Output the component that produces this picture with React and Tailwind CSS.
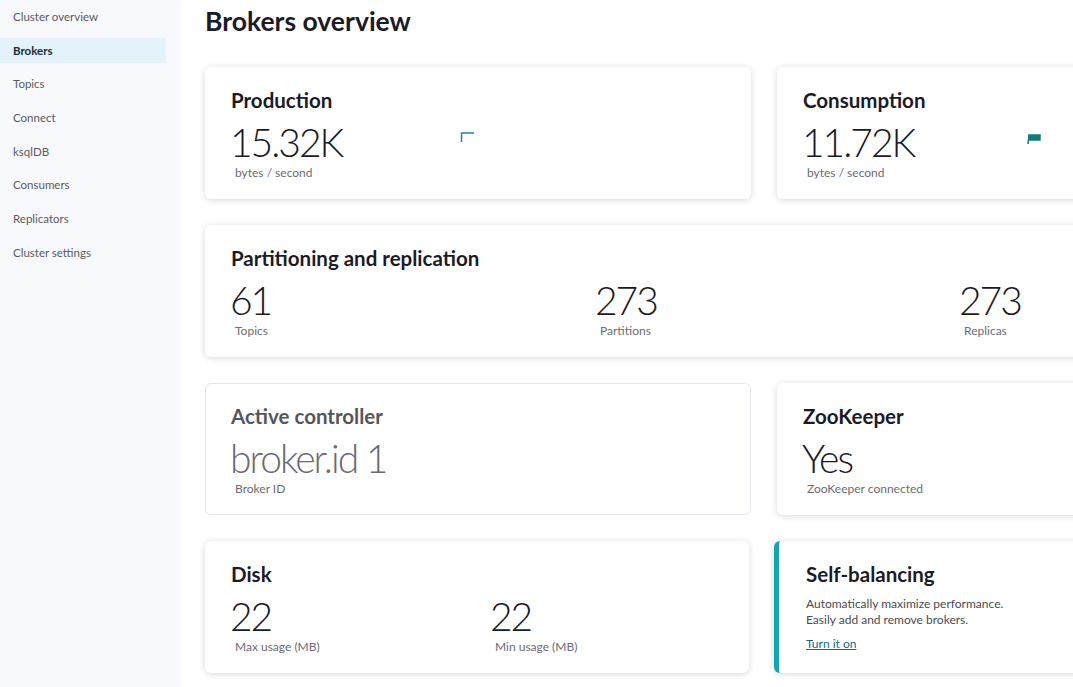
import React from "react";

const font = { fontFamily: "Lato, 'Noto Sans', sans-serif" };

function Card({ children, className = "" }) {
  return (
    <div className={`bg-white rounded-[6px] shadow-[0_1px_6px_rgba(30,40,80,0.18)] h-[132px] px-[26px] pt-[21px] ${className}`}>
      {children}
    </div>
  );
}

function Title({ children, className = "text-[#1b1b26]" }) {
  return <div className={`text-[20.5px] font-bold leading-[24px] ${className}`}>{children}</div>;
}

function Stat({ value, label, valueClass = "text-[#1b1b26]" }) {
  return (
    <div>
      <div className={`text-[39px] font-light leading-[39px] tracking-[-2px] mt-[11px] -ml-[1px] ${valueClass}`}>{value}</div>
      <div className="text-[12px] text-[#6b6b73] leading-[12px] ml-[4px] mt-[5px]">{label}</div>
    </div>
  );
}

export default function App() {
  const nav = ["Cluster overview", "Brokers", "Topics", "Connect", "ksqlDB", "Consumers", "Replicators", "Cluster settings"];
  return (
    <div style={font} className="w-[1073px] h-[687px] overflow-hidden flex bg-white">
      <aside className="w-[180px] shrink-0 bg-[#f8f9fc] shadow-[1px_0_4px_rgba(0,0,0,0.03)] pt-[4px] pr-[14px] flex flex-col gap-[8.7px]">
        {nav.map((n) => (
          <div
            key={n}
            className={`h-[25px] flex items-center pl-[13px] text-[11.5px] ${n === "Brokers" ? "bg-[#e4f2fc] font-bold text-[#1b2a3a]" : "text-[#5a5a62]"}`}
          >
            {n}
          </div>
        ))}
      </aside>
      <main className="flex-1 pl-[25px] pt-[5px]">
        <h1 className="text-[26.5px] font-bold text-[#1b1b26] leading-[32px]">Brokers overview</h1>
        <div className="mt-[30px] grid grid-cols-[546px_546px] gap-x-[26px] gap-y-[26px] w-[1118px]">
          <Card className="relative">
            <Title>Production</Title>
            <Stat value="15.32K" label="bytes / second" />
            <svg className="absolute left-[255px] top-[64px]" width="16" height="12" viewBox="0 0 16 12">
              <path d="M1.5 11 V2 H14" stroke="#1d8f8a" strokeWidth="1.5" fill="none" />
            </svg>
          </Card>
          <Card className="relative">
            <Title>Consumption</Title>
            <Stat value="11.72K" label="bytes / second" />
            <svg className="absolute left-[249px] top-[64px]" width="16" height="14" viewBox="0 0 16 14">
              <path d="M2 13 L3 4 L14 4 L14 9 L3.5 9" fill="#0f7d79" stroke="#0f7d79" strokeWidth="1.5" />
            </svg>
          </Card>
          <Card className="col-span-2">
            <Title>Partitioning and replication</Title>
            <div className="grid grid-cols-[365px_364px_1fr]">
              <Stat value="61" label="Topics" />
              <Stat value="273" label="Partitions" />
              <Stat value="273" label="Replicas" />
            </div>
          </Card>
          <div className="bg-white rounded-[6px] border border-[#e6e7ec] h-[132px] px-[25px] pt-[20px]">
            <Title className="text-[#55555e]">Active controller</Title>
            <Stat value="broker.id 1" label="Broker ID" valueClass="text-[#6a6a72]" />
          </div>
          <Card>
            <Title>ZooKeeper</Title>
            <Stat value="Yes" label="ZooKeeper connected" />
          </Card>
          <Card className="w-[544px]">
            <Title>Disk</Title>
            <div className="grid grid-cols-[260px_1fr]">
              <Stat value="22" label="Max usage (MB)" />
              <Stat value="22" label="Min usage (MB)" />
            </div>
          </Card>
          <div className="-ml-[3px] bg-white rounded-[6px] shadow-[0_1px_6px_rgba(30,40,80,0.18)] h-[132px] border-l-[5px] border-[#12a6ad] pl-[27px] pt-[21px]">
            <Title>Self-balancing</Title>
            <div className="mt-[10px] text-[12px] leading-[16px] text-[#4a4a52]">
              <div>Automatically maximize performance.</div>
              <div>Easily add and remove brokers.</div>
            </div>
            <a href="#" className="block mt-[9px] text-[12px] leading-[14px] text-[#0b6e86] underline">Turn it on</a>
          </div>
        </div>
      </main>
    </div>
  );
}
